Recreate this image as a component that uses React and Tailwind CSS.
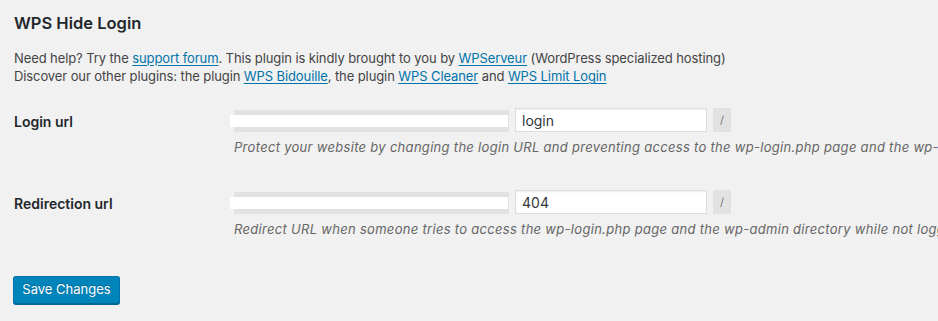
import React from 'react';

const Link = ({ children }) => (
  <a href="#" className="text-[#0073aa] underline decoration-1 underline-offset-2">
    {children}
  </a>
);

const UrlRow = ({ label, value, help, className = '' }) => (
  <div className={`flex ${className}`}>
    <div className="w-[220px] shrink-0 pt-[4px] text-[14px] leading-[20px] font-semibold text-[#23282d]">
      {label}
    </div>
    <div className="flex flex-col">
      <div className="flex items-start">
        {/* site base url, blanked out */}
        <div className="relative mt-[2px] h-[22px] w-[275px] bg-[#e2e2e2]">
          <div className="absolute left-[-4px] top-[5px] h-[12px] w-[278px] bg-white" />
        </div>
        <input
          type="text"
          defaultValue={value}
          className="ml-[6px] h-[24px] w-[192px] border border-[#dddddd] bg-white px-[6px] text-[14px] text-[#32373c] shadow-[inset_0_1px_2px_rgba(0,0,0,0.07)] outline-none"
        />
        <div className="ml-[6px] flex h-[24px] w-[18px] items-center justify-center bg-[#e2e2e2] text-[11px] text-[#777]">
          /
        </div>
      </div>
      <p className="mt-[6px] whitespace-nowrap text-[13px] leading-[18px] tracking-[0.3px] italic text-[#666666]">
        {help}
      </p>
    </div>
  </div>
);

export default function App() {
  return (
    <div className="min-h-[321px] w-[938px] overflow-hidden bg-[#f1f1f1] pl-[14px] pt-[12px] font-['Inter','Liberation_Sans',sans-serif] text-[#444444]">
      <h1 className="text-[16.5px] leading-[22px] font-semibold text-[#23282d]">WPS Hide Login</h1>

      <p className="mt-[15px] whitespace-nowrap text-[13px] leading-[18px] tracking-[-0.1px]">
        Need help? Try the <Link>support forum</Link>. This plugin is kindly brought to you by{' '}
        <Link>WPServeur</Link> (WordPress specialized hosting)
        <br />
        Discover our other plugins: the plugin <Link>WPS Bidouille</Link>, the plugin <Link>WPS Cleaner</Link> and{' '}
        <Link>WPS Limit Login</Link>
      </p>

      <UrlRow
        className="mt-[23px]"
        label="Login url"
        value="login"
        help="Protect your website by changing the login URL and preventing access to the wp-login.php page and the wp-admin directory to non-connected people."
      />

      <UrlRow
        className="mt-[34px]"
        label="Redirection url"
        value="404"
        help="Redirect URL when someone tries to access the wp-login.php page and the wp-admin directory while not logged in."
      />

      <button
        type="button"
        className="mt-[38px] ml-[-1px] h-[28px] w-[107px] rounded-[3px] border border-[#0073aa] border-b-[#006799] bg-[#0085ba] text-[13px] text-white shadow-[0_1px_0_#006799] [text-shadow:0_-1px_1px_#006799]"
      >
        Save Changes
      </button>
    </div>
  );
}
